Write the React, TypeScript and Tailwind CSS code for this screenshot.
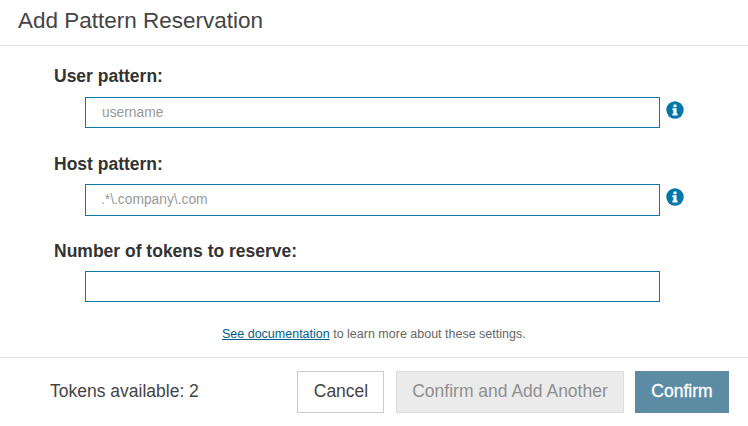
import React from "react";

function Info({ top }: { top: string }) {
  return (
    <svg width="18" height="18" viewBox="0 0 18 18" className={`shrink-0 ${top}`}>
      <circle cx="9" cy="9" r="8.7" fill="#0077a8" />
      <rect x="7.4" y="3.5" width="3.2" height="2.7" rx="0.6" fill="#fff" />
      <path d="M6.4 7.3h4.2v5.2h1v2H6.4v-2h1v-3.2h-1z" fill="#fff" />
    </svg>
  );
}

export default function App() {
  return (
    <div className="w-[748px] h-[426px] bg-white overflow-hidden text-[#333] font-['Liberation_Sans',Arial,sans-serif]">
      <div className="h-[46px] border-b border-[#e5e5e5] pl-[18px] pt-[6px]">
        <h1 className="text-[22.5px] leading-[30px] text-[#444]">Add Pattern Reservation</h1>
      </div>
      <div className="h-[311px] pl-[54px] pt-[19px] flex flex-col">
        <label className="text-[17.5px] leading-[22px] font-bold">User pattern:</label>
        <div className="mt-[10px] ml-[31px] flex items-start gap-[6px]">
          <input readOnly placeholder="username" className="w-[575px] h-[31px] border border-[#0f76a5] pl-[16px] pb-[1px] text-[13.8px] placeholder:text-[#999]" />
          <Info top="mt-[4px]" />
        </div>
        <label className="mt-[25px] text-[17.5px] leading-[22px] font-bold">Host pattern:</label>
        <div className="mt-[9px] ml-[31px] flex items-start gap-[6px]">
          <input readOnly placeholder=".*\.company\.com" className="w-[575px] h-[32px] border border-[#0f76a5] pl-[15px] pb-[2px] text-[13.8px] placeholder:text-[#999]" />
          <Info top="mt-[4px]" />
        </div>
        <label className="mt-[24px] text-[17.5px] leading-[22px] font-bold">Number of tokens to reserve:</label>
        <input readOnly className="mt-[9px] ml-[31px] w-[575px] h-[31px] border border-[#0f76a5]" />
        <p className="mt-[24px] ml-[168px] text-[12.5px] leading-[16px] text-[#666]">
          <a className="text-[#005f86] underline">See documentation</a> to learn more about these settings.
        </p>
      </div>
      <div className="border-t border-[#e5e5e5] h-[69px] flex items-center pl-[50px] pr-[19px] pb-[1px]">
        <span className="text-[17.5px] text-[#444]">Tokens available: 2</span>
        <button className="ml-auto w-[87px] h-[42px] border border-[#ccc] bg-white pl-[1px] text-[17.5px] text-[#444]">Cancel</button>
        <button className="ml-[12px] w-[228px] h-[42px] border border-[#ddd] bg-[#ebebeb] text-[17.5px] text-[#8f8f8f]">Confirm and Add Another</button>
        <button className="ml-[11px] w-[94px] h-[42px] bg-[#5b8ca3] text-[17.5px] text-white [-webkit-text-stroke:0.3px_#fff]">Confirm</button>
      </div>
    </div>
  );
}
